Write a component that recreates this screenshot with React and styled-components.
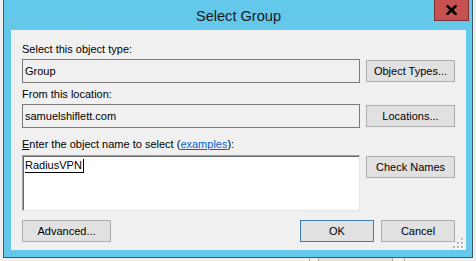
import React from "react";
import styled, { createGlobalStyle } from "styled-components";

const Global = createGlobalStyle`
  html, body { margin: 0; padding: 0; }
  body {
    background: #f0f0f0;
    font-family: "Liberation Sans", Arial, sans-serif;
    width: 476px;
    height: 261px;
    overflow: hidden;
  }
  #root { width: 476px; height: 261px; }
`;

const Page = styled.div`
  width: 476px;
  height: 261px;
  display: flex;
  flex-direction: column;
`;

const Window = styled.div`
  position: relative;
  box-sizing: border-box;
  width: 470px;
  height: 258px;
  margin-left: 3px;
  background: #64c8eb;
  border: 1px solid #3d5a68;
  border-top: none;
  padding: 0 6px 7px 7px;
  display: flex;
  flex-direction: column;
`;

const TitleBar = styled.div`
  height: 30px;
  flex: none;
  display: flex;
  align-items: center;
  justify-content: center;
`;

const Title = styled.span`
  font-size: 14.6px;
  color: #1a1a1a;
  margin-top: 1px;
`;

const CloseButton = styled.div`
  position: absolute;
  top: 0;
  right: 3px;
  width: 35px;
  height: 21px;
  box-sizing: border-box;
  background: #c75050;
  border: 1px solid #7a3434;
  border-top: none;
  display: flex;
  align-items: center;
  justify-content: center;
`;

const Client = styled.div`
  position: relative;
  flex: 1;
  background: #f0f0f0;
  padding: 13px 11px 0;
  display: flex;
  flex-direction: column;
  font-size: 11px;
  color: #000;
`;

const Label = styled.div`
  height: 13px;
  line-height: 13px;
  white-space: nowrap;
  margin-top: ${(p) => p.$gap || 0}px;
`;

const Key = styled.span`
  text-decoration: underline;
`;

const Link = styled.span`
  color: #0066cc;
  text-decoration: underline;
`;

const FieldRow = styled.div`
  display: grid;
  grid-template-columns: 1fr 89px;
  column-gap: 6px;
  align-items: ${(p) => (p.$top ? "start" : "center")};
  margin-top: ${(p) => p.$gap || 0}px;
`;

const Field = styled.div`
  box-sizing: border-box;
  height: 24px;
  border: 1px solid #7a7a7a;
  background: #f0f0f0;
  padding: 0 2px;
  display: flex;
  align-items: center;
  white-space: nowrap;
`;

const NameBox = styled.div`
  box-sizing: border-box;
  height: 56px;
  background: #fff;
  border-top: 1px solid #a0a0a0;
  border-left: 1px solid #a0a0a0;
  border-right: 1px solid #e3e3e3;
  border-bottom: 1px solid #e3e3e3;
  box-shadow: inset 1px 1px 0 #696969;
  padding: 3px 2px 0;
`;

const Resolved = styled.span`
  display: inline-block;
  line-height: 13px;
  border-bottom: 1px solid #000;
  border-right: 1px solid #000;
  padding-right: 1px;
`;

const Button = styled.div`
  box-sizing: border-box;
  height: 22px;
  width: ${(p) => p.$w || 89}px;
  background: #e1e1e1;
  border: 1px solid ${(p) => (p.$default ? "#3c7fb1" : "#adadad")};
  display: flex;
  align-items: center;
  justify-content: center;
  white-space: nowrap;
  margin-top: ${(p) => p.$offset || 0}px;
`;

const Footer = styled.div`
  display: flex;
  align-items: center;
  gap: 7px;
  margin-top: 9px;
`;

const Spacer = styled.div`
  flex: 1;
`;

const Grip = styled.svg`
  position: absolute;
  right: 2px;
  bottom: 1px;
`;

const BehindStrip = styled.div`
  height: 3px;
  display: flex;
  align-items: stretch;
`;

const BehindPart = styled.div`
  margin-left: ${(p) => p.$left}px;
  width: ${(p) => p.$w}px;
  background: ${(p) => p.$bg || "transparent"};
  border-left: 1px solid #adadad;
  border-right: ${(p) => (p.$right ? "1px solid #adadad" : "none")};
`;

function SizeGrip() {
  const dots = [
    [10, 2],
    [10, 6],
    [6, 6],
    [10, 10],
    [6, 10],
    [2, 10],
  ];
  return (
    <Grip width="13" height="13" viewBox="0 0 13 13">
      {dots.map(([x, y], i) => (
        <g key={i}>
          <rect x={x + 1} y={y + 1} width="2" height="2" fill="#ffffff" />
          <rect x={x} y={y} width="2" height="2" fill="#b8b8b8" />
        </g>
      ))}
    </Grip>
  );
}

export default function App() {
  return (
    <>
      <Global />
      <Page>
        <Window>
          <TitleBar>
            <Title>Select Group</Title>
          </TitleBar>
          <CloseButton>
            <svg width="11" height="10" viewBox="0 0 11 10">
              <path d="M1.5 1.2 L9.5 8.8 M9.5 1.2 L1.5 8.8" stroke="#000" strokeWidth="2.6" strokeLinecap="square" />
            </svg>
          </CloseButton>
          <Client>
            <Label>Select this object type:</Label>
            <FieldRow $gap={3}>
              <Field>Group</Field>
              <Button>Object Types...</Button>
            </FieldRow>
            <Label $gap={5}>From this location:</Label>
            <FieldRow $gap={3}>
              <Field>samuelshiflett.com</Field>
              <Button>Locations...</Button>
            </FieldRow>
            <Label $gap={10}>
              <Key>E</Key>nter the object name to select (<Link>examples</Link>):
            </Label>
            <FieldRow $gap={4} $top>
              <NameBox>
                <Resolved>RadiusVPN</Resolved>
              </NameBox>
              <Button $offset={1}>Check Names</Button>
            </FieldRow>
            <Footer>
              <Button>Advanced...</Button>
              <Spacer />
              <Button $w={74} $default>OK</Button>
              <Button $w={74}>Cancel</Button>
            </Footer>
            <SizeGrip />
          </Client>
        </Window>
        <BehindStrip>
          <BehindPart $left={309} $w={8} />
          <BehindPart $left={0} $w={73} $bg="#e1e1e1" $right />
          <BehindPart $left={11} $w={1} />
        </BehindStrip>
      </Page>
    </>
  );
}
